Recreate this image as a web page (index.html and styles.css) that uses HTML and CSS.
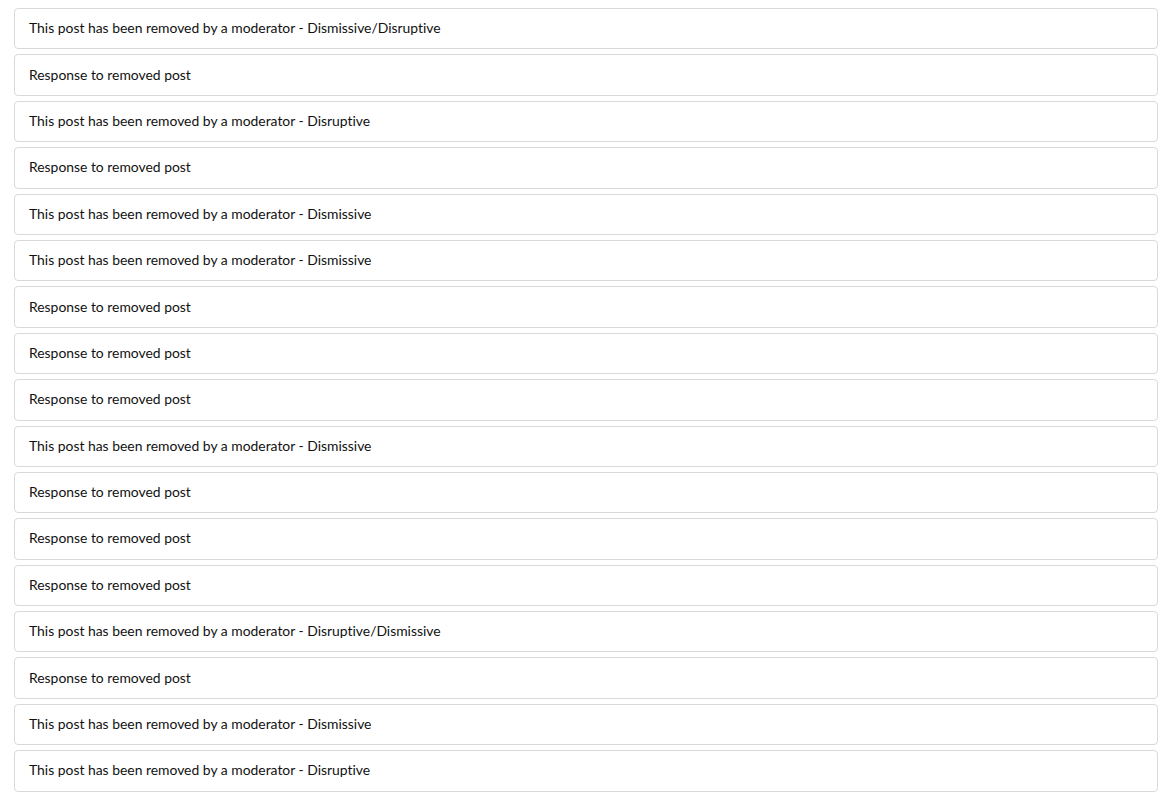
FILE: index.html
```html
<!DOCTYPE html>
<html>
<head>
<meta charset="utf-8">
<link rel="stylesheet" href="styles.css">
</head>
<body>
<div class="list">
<div class="item">This post has been removed by a moderator - Dismissive/Disruptive</div>
<div class="item">Response to removed post</div>
<div class="item">This post has been removed by a moderator - Disruptive</div>
<div class="item">Response to removed post</div>
<div class="item">This post has been removed by a moderator - Dismissive</div>
<div class="item">This post has been removed by a moderator - Dismissive</div>
<div class="item">Response to removed post</div>
<div class="item">Response to removed post</div>
<div class="item">Response to removed post</div>
<div class="item">This post has been removed by a moderator - Dismissive</div>
<div class="item">Response to removed post</div>
<div class="item">Response to removed post</div>
<div class="item">Response to removed post</div>
<div class="item">This post has been removed by a moderator - Disruptive/Dismissive</div>
<div class="item">Response to removed post</div>
<div class="item">This post has been removed by a moderator - Dismissive</div>
<div class="item">This post has been removed by a moderator - Disruptive</div>
</div>
</body>
</html>
```
FILE: styles.css
```css
html, body { margin: 0; padding: 0; background: #fff; }
body { padding: 8px 11px 0 14px; font-family: Lato, "Open Sans", sans-serif; }
.list { display: flex; flex-direction: column; gap: 5px; }
.item {
  box-sizing: border-box;
  height: 41.4px;
  border: 1px solid #d9d9d9;
  border-radius: 4px;
  padding: 0 14px 2px;
  display: flex;
  align-items: center;
  font-size: 13.9px;
  font-variant-ligatures: none;
  color: #111;
}
```
